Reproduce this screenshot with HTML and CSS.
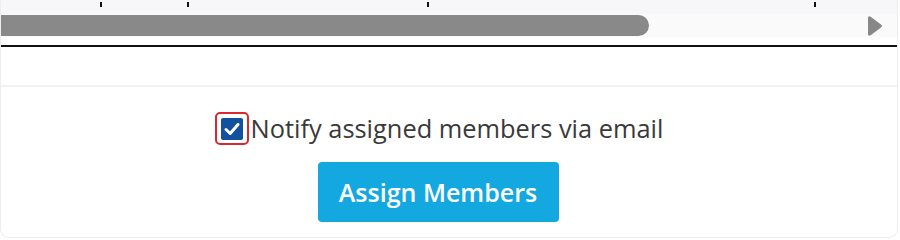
FILE: index.html
```html
<!DOCTYPE html>
<html>
<head>
<meta charset="utf-8">
<link rel="stylesheet" href="styles.css">
</head>
<body>
<div class="card">
  <div class="ruler">
    <span class="tick t1"></span>
    <span class="tick t2"></span>
    <span class="tick t3"></span>
    <span class="tick t4"></span>
  </div>
  <div class="scrollbar">
    <div class="thumb"></div>
    <svg class="arrow" width="18" height="24" viewBox="0 0 18 24"><path d="M3 4 Q3 1 6 3 L16 10.5 Q18 12 16 13.5 L6 21 Q3 23 3 20 Z" fill="#888"/></svg>
  </div>
  <div class="axis"></div>
  <div class="chart-space"></div>
  <div class="footer">
    <label class="notify">
      <span class="cb-wrap"><span class="cb"><svg width="22" height="22" viewBox="0 0 22 22"><path d="M5 11.5 L9.2 15.5 L17 6.5" fill="none" stroke="#fff" stroke-width="3" stroke-linecap="round" stroke-linejoin="round"/></svg></span></span>
      <span class="label-text">Notify assigned members via email</span>
    </label>
    <button class="btn">Assign Members</button>
  </div>
</div>
</body>
</html>
```
FILE: styles.css
```css
html, body { margin: 0; padding: 0; background: #fff; }
body { font-family: "Open Sans", "Liberation Sans", sans-serif; width: 900px; height: 240px; overflow: hidden; }
.card {
  width: 898px;
  height: 238px;
  border: 1px solid #ececf2;
  border-top: none;
  border-radius: 0 0 9px 9px;
  overflow: hidden;
  display: flex;
  flex-direction: column;
  box-sizing: border-box;
}
.ruler { height: 14px; background: #f7f7fa; position: relative; }
.tick { position: absolute; top: 2px; width: 2px; height: 5px; background: #111; }
.t1 { left: 99px; }
.t2 { left: 186px; }
.t3 { left: 426px; }
.t4 { left: 813px; }
.scrollbar { height: 23px; background: #fafafa; display: flex; align-items: center; justify-content: space-between; padding-right: 14px; }
.thumb { width: 648px; height: 21px; background: #898989; border-radius: 0 11px 11px 0; }
.arrow { display: block; }
.axis { margin-top: 8px; height: 2px; background: #111; }
.chart-space { height: 38px; background: #fff; border-bottom: 2px solid #f1f1f4; }
.footer { flex: 1; display: flex; flex-direction: column; align-items: center; padding-top: 25px; padding-right: 20px; gap: 17px; }
.notify { display: flex; align-items: center; gap: 2px; cursor: pointer; }
.cb-wrap { border: 2px solid #d9282f; border-radius: 5px; display: flex; align-items: center; justify-content: center; box-sizing: border-box; width: 34px; height: 33px; }
.cb { width: 22px; height: 22px; background: #11519e; border-radius: 2px; display: block; }
.cb svg { display: block; }
.label-text { font-size: 25.4px; color: #3a3a3a; line-height: 33px; }
.btn {
  font-family: "Open Sans", "Liberation Sans", sans-serif;
  font-weight: 600;
  font-size: 25px;
  color: #fff;
  background: #14a8e0;
  border: none;
  border-radius: 4px;
  width: 241px;
  height: 60px;
  padding: 0;
  margin-right: 2px;
}
```
